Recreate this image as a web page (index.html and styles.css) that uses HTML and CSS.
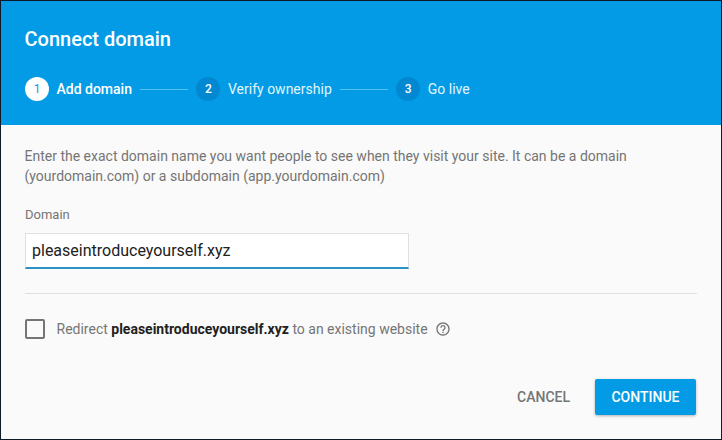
FILE: index.html
```html
<!DOCTYPE html>
<html lang="en">
<head>
<meta charset="utf-8">
<title>Connect domain</title>
<link rel="stylesheet" href="styles.css">
</head>
<body>
<div class="dialog">
  <header class="head">
    <h1 class="title">Connect domain</h1>
    <ol class="steps">
      <li class="step active"><span class="num">1</span><span class="label">Add domain</span></li>
      <li class="line"></li>
      <li class="step"><span class="num">2</span><span class="label">Verify ownership</span></li>
      <li class="line"></li>
      <li class="step"><span class="num">3</span><span class="label">Go live</span></li>
    </ol>
  </header>
  <main class="body">
    <p class="intro">Enter the exact domain name you want people to see when they visit your site. It can be a domain (yourdomain.com) or a subdomain (app.yourdomain.com)</p>
    <label class="field-label" for="domain">Domain</label>
    <input class="field" id="domain" type="text" value="pleaseintroduceyourself.xyz">
    <hr class="rule">
    <div class="redirect">
      <span class="check"></span>
      <span class="redirect-text">Redirect <b>pleaseintroduceyourself.xyz</b> to an existing website</span>
      <svg class="help" viewBox="0 0 24 24" width="16" height="16"><path fill="#757575" d="M11 18h2v-2h-2v2zm1-16C6.48 2 2 6.48 2 12s4.48 10 10 10 10-4.48 10-10S17.52 2 12 2zm0 18c-4.41 0-8-3.59-8-8s3.59-8 8-8 8 3.59 8 8-3.59 8-8 8zm0-14c-2.21 0-4 1.79-4 4h2c0-1.1.9-2 2-2s2 .9 2 2c0 2-3 1.75-3 5h2c0-2.25 3-2.5 3-5 0-2.21-1.79-4-4-4z"/></svg>
    </div>
    <div class="actions">
      <button class="btn cancel" type="button">CANCEL</button>
      <button class="btn continue" type="button">CONTINUE</button>
    </div>
  </main>
</div>
</body>
</html>
```
FILE: styles.css
```css
* { box-sizing: border-box; }
html, body { margin: 0; padding: 0; }
body { width: 722px; height: 440px; overflow: hidden; background: #0f1a28; font-family: Roboto, "Liberation Sans", sans-serif; }
.dialog { margin: 1px; height: 438px; display: flex; flex-direction: column; background: #fafafa; }
.head { height: 124px; flex: none; background: #039be5; padding: 0 24px; color: #fff; }
.title { margin: 0 0 0 -0.5px; padding-top: 26px; font-size: 20px; line-height: 24px; font-weight: 500; color: #fff; }
.steps { list-style: none; margin: 26px 0 0; padding: 0; display: flex; align-items: center; height: 24px; }
.step { display: flex; align-items: center; }
.num { width: 24px; height: 24px; border-radius: 50%; background: #0288d1; color: #fff; font-size: 12px; display: flex; align-items: center; justify-content: center; font-weight: 500; }
.label { margin-left: 7.5px; margin-right: 0.5px; font-size: 14px; color: #e1f5fe; }
.active .num { background: #fff; color: #039be5; font-weight: 400; }
.active .label { color: #fff; font-weight: 500; }
.line { width: 48px; height: 1px; background: #4fc3f7; margin: 0 8px; }
.body { flex: 1; padding: 0 24px; display: flex; flex-direction: column; }
.intro { margin: 21px 0 0 -0.5px; font-size: 14px; line-height: 20px; color: #757575; max-width: 640px; }
.field-label { margin-top: 21px; font-size: 13px; line-height: 16px; color: #757575; }
.field { margin-top: 10px; width: 384px; height: 36px; border: 1px solid #e0e0e0; border-bottom: 2px solid #2e93c4; background: #fff; padding: 0 6px; font: 400 16px Roboto, sans-serif; color: #212121; outline: none; border-radius: 0; }
.rule { margin: 24px 0 0; border: 0; border-top: 1px solid #e0e0e0; }
.redirect { margin-top: 25px; display: flex; align-items: center; height: 20px; }
.check { width: 20px; height: 20px; border: 2px solid #757575; border-radius: 2px; flex: none; }
.redirect-text { margin-left: 11.5px; font-size: 14px; color: #757575; }
.redirect-text b { color: #212121; font-weight: 700; }
.help { margin-left: 7.5px; }
.actions { margin-top: 40px; margin-right: 1px; display: flex; justify-content: flex-end; align-items: center; }
.btn { font-family: Roboto, sans-serif; font-size: 14px; font-weight: 500; border: 0; border-radius: 2px; height: 36px; }
.cancel { background: transparent; color: #757575; padding: 0; margin-right: 25px; }
.continue { width: 101px; background: #039be5; color: #fff; box-shadow: 0 1px 3px rgba(0,0,0,.3); }
```
